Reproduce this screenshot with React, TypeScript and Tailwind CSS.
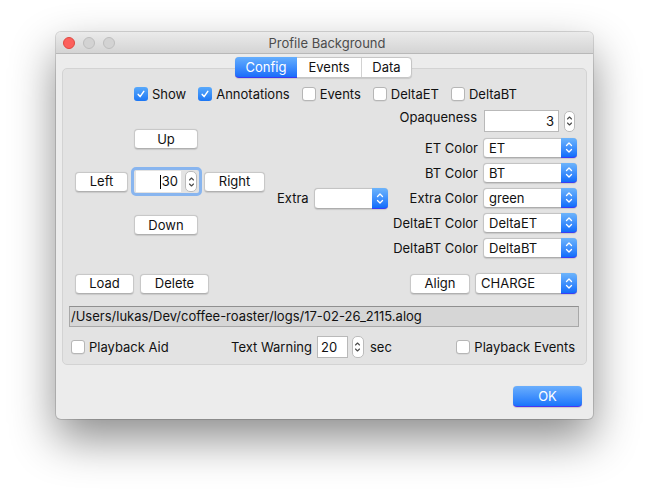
import React from 'react';

function ComboArrows() {
  return (
    <svg width="8" height="13" viewBox="0 0 8 13" fill="none" stroke="#fff" strokeWidth="1.3" strokeLinecap="round" strokeLinejoin="round">
      <path d="M1.5 4.5 L4 2 L6.5 4.5" />
      <path d="M1.5 8.5 L4 11 L6.5 8.5" />
    </svg>
  );
}

function StepArrows() {
  return (
    <svg width="7" height="14" viewBox="0 0 7 14" fill="none" stroke="#4a4a4a" strokeWidth="1.1" strokeLinecap="round" strokeLinejoin="round">
      <path d="M1.5 5 L3.5 3 L5.5 5" />
      <path d="M1.5 9 L3.5 11 L5.5 9" />
    </svg>
  );
}

function Btn({ label, className = '' }: { label: string; className?: string }) {
  return (
    <div className={`flex items-center justify-center bg-white border border-[#c8c8c8] border-b-[#b0b0b0] rounded-[4px] shadow-[0_0.5px_1px_rgba(0,0,0,0.12)] leading-none ${className}`}>
      {label}
    </div>
  );
}

function Combo({ value, className = '' }: { value: string; className?: string }) {
  return (
    <div className={`flex bg-white border border-[#c4c4c4] border-b-[#adadad] rounded-[4px] shadow-[0_0.5px_1px_rgba(0,0,0,0.12)] ${className}`}>
      <div className="flex-1 flex items-center pl-[5px] leading-none">{value}</div>
      <div className="w-[16px] -my-px -mr-px flex items-center justify-center rounded-r-[4px] bg-linear-to-b from-[#6db4fb] to-[#0f6cfb] border-b border-[#3a3ff5]">
        <ComboArrows />
      </div>
    </div>
  );
}

function Stepper({ className = '' }: { className?: string }) {
  return (
    <div className={`flex items-center justify-center bg-white border border-[#bcbcbc] rounded-[5px] ${className}`}>
      <StepArrows />
    </div>
  );
}

function Check({ label, checked = false }: { label: string; checked?: boolean }) {
  return (
    <div className="flex items-center gap-[4px]">
      {checked ? (
        <div className="w-[14px] h-[14px] rounded-[3px] bg-linear-to-b from-[#58a9fb] to-[#1b76f4] flex items-center justify-center">
          <svg width="10" height="10" viewBox="0 0 10 10" fill="none" stroke="#fff" strokeWidth="1.5" strokeLinecap="round" strokeLinejoin="round">
            <path d="M2.2 5.4 L4.1 7.6 L7.8 2.4" />
          </svg>
        </div>
      ) : (
        <div className="w-[14px] h-[14px] rounded-[3px] bg-white border border-[#b6b6b6] shadow-[0_0.5px_0.5px_rgba(0,0,0,0.1)]" />
      )}
      <span className="leading-none">{label}</span>
    </div>
  );
}

function TitleBar() {
  return (
    <div className="h-[22px] flex items-center relative bg-linear-to-b from-[#ebebeb] to-[#d4d4d4] border-b border-[#b8b8b8]">
      <div className="flex items-center gap-[8px] pl-[7px]">
        <div className="w-[12px] h-[12px] rounded-full bg-[#fc605c] border border-[#de4840]" />
        <div className="w-[12px] h-[12px] rounded-full bg-[#d3d3d3] border border-[#bdbdbd]" />
        <div className="w-[12px] h-[12px] rounded-full bg-[#d3d3d3] border border-[#bdbdbd]" />
      </div>
      <div className="flex-1 text-center text-[#4c4c4c] pr-[54px] pt-[2px] leading-none">Profile Background</div>
    </div>
  );
}

function Tabs() {
  return (
    <div className="relative z-10 self-center -translate-x-px mt-[3px] h-[21px] flex bg-white border border-[#c6c6c6] rounded-[4px] shadow-[0_0.5px_1px_rgba(0,0,0,0.12)] leading-none">
      <div className="w-[62px] -my-px -ml-px flex items-center justify-center rounded-l-[4px] bg-linear-to-b from-[#65aefd] to-[#1a6cfa] border-b border-[#3c39f0] text-white">Config</div>
      <div className="w-[65px] flex items-center justify-center border-r border-[#d2d2d2]">Events</div>
      <div className="w-[49px] flex items-center justify-center">Data</div>
    </div>
  );
}

export default function App() {
  return (
    <div className="w-[649px] h-[499px] bg-white pl-[56px] pt-[32px] [font-family:Inter,sans-serif] text-[13px] text-[#111]">
      <div className="w-[537px] h-[387px] rounded-[5px] bg-[#ececec] overflow-hidden flex flex-col shadow-[0_20px_45px_rgba(0,0,0,0.45),0_0_0_1px_rgba(0,0,0,0.14)]">
        <TitleBar />
        <div className="flex flex-col px-[6px]">
          <Tabs />
          <div className="-mt-[10px] h-[297px] rounded-[5px] border border-[#d3d3d3] bg-[#e3e3e3] flex flex-col">
            {/* checkbox row */}
            <div className="mt-[18px] h-[14px] flex items-center justify-center gap-[12px] pl-[2px]">
              <Check label="Show" checked />
              <Check label="Annotations" checked />
              <Check label="Events" />
              <Check label="DeltaET" />
              <Check label="DeltaBT" />
            </div>

            {/* main area */}
            <div className="mt-[9px] h-[148px] flex pl-[12px] pr-[9px]">
              <div className="w-[190px] flex flex-col">
                <Btn label="Up" className="ml-[59px] mt-[19px] w-[64px] h-[20px]" />
                <div className="mt-[18px] flex items-center">
                  <Btn label="Left" className="w-[53px] h-[20px]" />
                  <div className="ml-[3px] h-[29px] w-[71px] flex items-center gap-[4px] border-[3px] border-[#88b5ef] rounded-[5px] pl-[2px]">
                    <div className="w-[45px] h-[21px] bg-white flex items-center justify-end pr-[3px] leading-none">
                      <span className="w-px h-[14px] bg-black mr-px" />
                      30
                    </div>
                    <Stepper className="w-[12px] h-[21px]" />
                  </div>
                  <Btn label="Right" className="ml-[2px] w-[61px] h-[20px]" />
                </div>
                <Btn label="Down" className="ml-[59px] mt-[19px] w-[64px] h-[20px]" />
              </div>

              <div className="ml-[12px] mt-[78px] h-[21px] flex items-center gap-[5px]">
                <span className="leading-none">Extra</span>
                <Combo value="" className="w-[74px] h-[21px]" />
              </div>

              <div className="ml-auto flex flex-col items-end">
                <div className="h-[22px] flex items-center gap-[7px] mr-[2px]">
                  <span className="self-start leading-none pt-[1px]">Opaqueness</span>
                  <div className="w-[75px] h-[22px] bg-white border border-[#b9b9b9] flex items-center justify-end pr-[4px] leading-none">3</div>
                  <Stepper className="w-[11px] h-[21px] -ml-[2px]" />
                </div>
                <div className="mt-[6px] flex flex-col items-end gap-[5px]">
                  {[
                    ['ET Color', 'ET'],
                    ['BT Color', 'BT'],
                    ['Extra Color', 'green'],
                    ['DeltaET Color', 'DeltaET'],
                    ['DeltaBT Color', 'DeltaBT'],
                  ].map(([label, value]) => (
                    <div key={label} className="h-[20px] flex items-center gap-[5px]">
                      <span className="leading-none">{label}</span>
                      <Combo value={value} className="w-[94px] h-[20px]" />
                    </div>
                  ))}
                </div>
              </div>
            </div>

            {/* load / align row */}
            <div className="mt-[15px] h-[21px] flex items-center pl-[12px] pr-[9px]">
              <Btn label="Load" className="w-[59px] h-[20px]" />
              <Btn label="Delete" className="ml-[6px] w-[69px] h-[20px]" />
              <Btn label="Align" className="ml-auto w-[60px] h-[20px]" />
              <Combo value="CHARGE" className="ml-[5px] w-[102px] h-[21px]" />
            </div>

            {/* path */}
            <div className="mt-[12px] ml-[6px] mr-[7px] h-[21px] bg-[#d6d6d6] border border-[#a8a8a8] border-t-[#8f8f8f] flex items-center pl-[1px] leading-none">
              /Users/lukas/Dev/coffee-roaster/logs/17-02-26_2115.alog
            </div>

            {/* bottom row */}
            <div className="mt-[9px] h-[22px] flex items-center pl-[8px] pr-[11px]">
              <div className="w-[160px]">
                <Check label="Playback Aid" />
              </div>
              <span className="leading-none">Text Warning</span>
              <div className="ml-[5px] w-[31px] h-[22px] bg-white border border-[#b9b9b9] flex items-center pl-[3px] leading-none">20</div>
              <Stepper className="ml-[4px] w-[12px] h-[22px]" />
              <span className="ml-[6px] leading-none">sec</span>
              <div className="ml-auto">
                <Check label="Playback Events" />
              </div>
            </div>
          </div>

          <div className="mt-[21px] flex justify-end pr-[5px]">
            <div className="w-[69px] h-[21px] flex items-center justify-center rounded-[4px] bg-linear-to-b from-[#6aaefc] to-[#1774fb] border-b border-[#4a36ef] text-white leading-none shadow-[0_0.5px_1px_rgba(0,0,0,0.15)]">
              OK
            </div>
          </div>
        </div>
      </div>
    </div>
  );
}
